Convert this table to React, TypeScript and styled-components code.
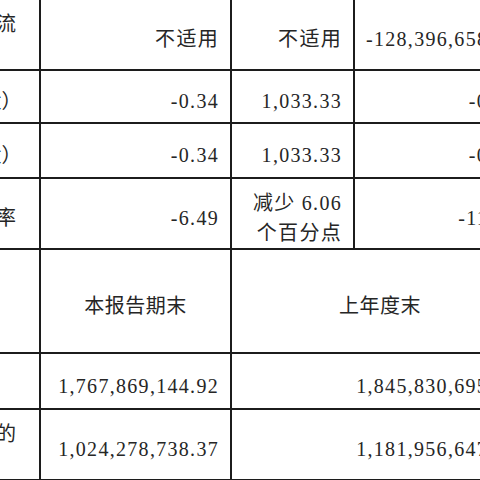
import React from "react";
import styled, { createGlobalStyle } from "styled-components";

const Global = createGlobalStyle`
  html, body { margin: 0; padding: 0; background: #ffffff; }
`;

const Page = styled.div`
  width: 480px;
  height: 480px;
  overflow: hidden;
  background: #ffffff;
`;

const Table = styled.table`
  border-collapse: collapse;
  table-layout: fixed;
  width: 879px;
  margin-left: -191px;
  margin-top: -3px;
`;

const Row = styled.tr<{ $h: number }>`
  height: ${(p) => p.$h}px;
`;

const Cell = styled.td`
  border: 2px solid #1c1c1c;
  font-family: "Liberation Serif", "Noto Sans CJK SC", serif;
  font-size: 20px;
  line-height: 30px;
  color: #262626;
  padding: 9px 11px 0 11px;
  vertical-align: middle;
  box-sizing: border-box;
`;

const LabelCell = styled(Cell)`
  text-align: left;
  padding-left: 5px;
`;

const NumCell = styled(Cell)`
  text-align: right;
  letter-spacing: 1.3px;
`;

const HeadCell = styled(Cell)`
  text-align: center;
  letter-spacing: 0.5px;
`;

type Line = {
  label: string;
  h: number;
  a: React.ReactNode;
  b: React.ReactNode;
  c: string;
  d: string;
};

const upper: Line[] = [
  { label: "经营活动产生的现金流量净额（元）", h: 72, a: "不适用", b: "不适用", c: "-128,396,658.41", d: "不适用" },
  { label: "基本每股收益（元/股）", h: 53, a: "-0.34", b: "1,033.33", c: "-0.17", d: "-100.00%" },
  { label: "稀释每股收益（元/股）", h: 55, a: "-0.34", b: "1,033.33", c: "-0.17", d: "-100.00%" },
  {
    label: "加权平均净资产收益率",
    h: 71,
    a: "-6.49",
    b: (
      <>
        减少 6.06
        <br />
        个百分点
      </>
    ),
    c: "-11.96",
    d: "-0.43",
  },
];

export default function App() {
  return (
    <Page>
      <Global />
      <Table>
        <colgroup>
          <col style={{ width: 230 }} />
          <col style={{ width: 191 }} />
          <col style={{ width: 123 }} />
          <col style={{ width: 175 }} />
          <col style={{ width: 160 }} />
        </colgroup>
        <tbody>
          {upper.map((r) => (
            <Row $h={r.h} key={r.label}>
              <LabelCell>{r.label}</LabelCell>
              <NumCell>{r.a}</NumCell>
              <NumCell>{r.b}</NumCell>
              <NumCell>{r.c}</NumCell>
              <NumCell>{r.d}</NumCell>
            </Row>
          ))}
          <Row $h={104}>
            <LabelCell></LabelCell>
            <HeadCell>本报告期末</HeadCell>
            <HeadCell colSpan={2}>上年度末</HeadCell>
            <HeadCell>本报告期末比上年度末增减</HeadCell>
          </Row>
          <Row $h={56}>
            <LabelCell>总资产（元）</LabelCell>
            <NumCell>1,767,869,144.92</NumCell>
            <NumCell colSpan={2}>1,845,830,695.24</NumCell>
            <NumCell>-4.22%</NumCell>
          </Row>
          <Row $h={69}>
            <LabelCell>归属于上市公司股东的净资产（元）</LabelCell>
            <NumCell>1,024,278,738.37</NumCell>
            <NumCell colSpan={2}>1,181,956,647.55</NumCell>
            <NumCell>-13.34%</NumCell>
          </Row>
          <Row $h={60}>
            <LabelCell>营业收入（元）</LabelCell>
            <NumCell>1,000,000.00</NumCell>
            <NumCell colSpan={2}>1,000,000.00</NumCell>
            <NumCell>0.00%</NumCell>
          </Row>
        </tbody>
      </Table>
    </Page>
  );
}
